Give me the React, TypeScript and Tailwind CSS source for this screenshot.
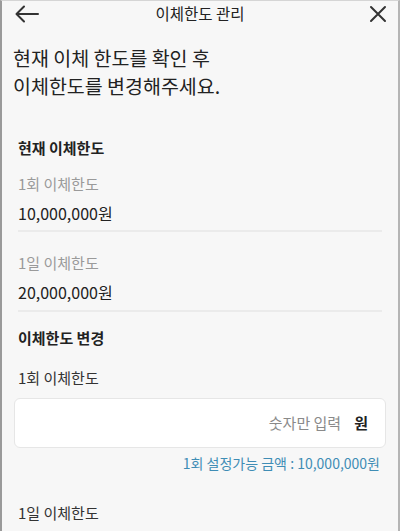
export default function App() {
  const font = { fontFamily: '"Noto Sans CJK KR", "Noto Sans", sans-serif' };
  return (
    <div
      style={font}
      className="w-[400px] h-[531px] overflow-hidden bg-[#f7f7f7] border-l-2 border-r-2 border-t border-l-[#9a9a9a] border-r-[#b5b5b5] border-t-[#d5d5d5] text-[#222]"
    >
      {/* header */}
      <div className="relative h-[26px] flex items-center justify-center">
        <svg className="absolute left-[12px] top-[3px]" width="26" height="20" viewBox="0 0 26 20" fill="none" stroke="#333" strokeWidth="2" strokeLinecap="round" strokeLinejoin="round">
          <path d="M24 10H3" />
          <path d="M10 2.5 2.5 10l7.5 7.5" />
        </svg>
        <span className="text-[15.5px] leading-none text-[#222]">이체한도 관리</span>
        <svg className="absolute right-[11px] top-[4px]" width="18" height="18" viewBox="0 0 18 18" fill="none" stroke="#333" strokeWidth="2" strokeLinecap="round">
          <path d="M2 2l14 14M16 2 2 16" />
        </svg>
      </div>

      <div className="px-[11px] pt-[17px] text-[19.5px] leading-[28px] text-[#222]">
        <p>현재 이체 한도를 확인 후</p>
        <p>이체한도를 변경해주세요.</p>
      </div>

      {/* current limits */}
      <div className="px-[16px] mt-[37px]">
        <h2 className="text-[15px] font-bold leading-[22px] text-[#222]">현재 이체한도</h2>

        <div className="pt-[14px] pb-[6px] border-b-2 border-[#ebebeb]">
          <p className="text-[15px] leading-[22px] text-[#9a9a9a]">1회 이체한도</p>
          <p className="mt-[7px] text-[16px] leading-[22px] text-[#222]">10,000,000원</p>
        </div>

        <div className="pt-[20px] pb-[7px] border-b-2 border-[#ebebeb]">
          <p className="text-[15px] leading-[22px] text-[#9a9a9a]">1일 이체한도</p>
          <p className="mt-[7px] text-[16px] leading-[22px] text-[#222]">20,000,000원</p>
        </div>

        <h2 className="mt-[15px] text-[15px] font-bold leading-[22px] text-[#222]">이체한도 변경</h2>
        <p className="mt-[18px] text-[15px] leading-[22px] text-[#333]">1회 이체한도</p>
      </div>

      <div className="px-[12px] mt-[9px]">
        <div className="h-[50px] bg-white border border-[#e6e6e6] rounded-[6px] flex items-center justify-end pr-[17px] gap-[13px]">
          <span className="text-[15px] text-[#8a8a8a]">숫자만 입력</span>
          <span className="text-[15px] font-bold text-[#222]">원</span>
        </div>
        <p className="mt-[6px] text-right pr-[6px] text-[14px] leading-[18px] text-[#3f8db5]">1회 설정가능 금액 : 10,000,000원</p>
      </div>

      <p className="px-[16px] mt-[30px] text-[15px] leading-[22px] text-[#333]">1일 이체한도</p>
    </div>
  );
}
